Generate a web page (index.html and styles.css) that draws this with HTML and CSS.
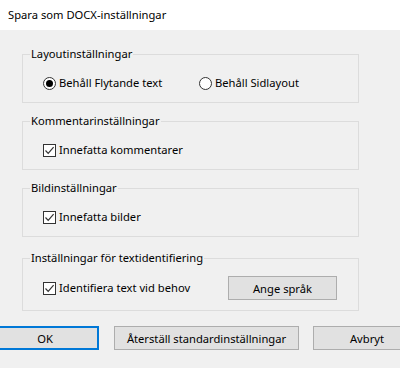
FILE: index.html
```html
<!DOCTYPE html>
<html lang="sv">

<head>
  <meta charset="UTF-8" />
  <title>Spara som DOCX-inställningar</title>
  <link rel="stylesheet" href="styles.css">
</head>

<body>
  <div class="titlebar">Spara som DOCX-inställningar</div>
  <div class="dialog">

    <fieldset class="group">
      <legend>Layoutinställningar</legend>
      <div class="row">
        <label class="option wide"><span class="radio checked"></span>Behåll Flytande text</label>
        <label class="option"><span class="radio"></span>Behåll Sidlayout</label>
      </div>
    </fieldset>

    <fieldset class="group">
      <legend>Kommentarinställningar</legend>
      <div class="row">
        <label class="option"><span class="check"><svg viewBox="0 0 11 11" width="11" height="11"><path d="M1.5 5.5 L4.2 8.3 L9.6 2.2" fill="none" stroke="#333" stroke-width="1.2"/></svg></span>Innefatta kommentarer</label>
      </div>
    </fieldset>

    <fieldset class="group pictures">
      <legend>Bildinställningar</legend>
      <div class="row">
        <label class="option"><span class="check"><svg viewBox="0 0 11 11" width="11" height="11"><path d="M1.5 5.5 L4.2 8.3 L9.6 2.2" fill="none" stroke="#333" stroke-width="1.2"/></svg></span>Innefatta bilder</label>
      </div>
    </fieldset>

    <fieldset class="group last">
      <legend>Inställningar för textidentifiering</legend>
      <div class="row spread">
        <label class="option"><span class="check"><svg viewBox="0 0 11 11" width="11" height="11"><path d="M1.5 5.5 L4.2 8.3 L9.6 2.2" fill="none" stroke="#333" stroke-width="1.2"/></svg></span>Identifiera text vid behov</label>
        <button class="btn lang">Ange språk</button>
      </div>
    </fieldset>

    <div class="actions">
      <button class="btn ok">OK</button>
      <button class="btn reset">Återställ standardinställningar</button>
      <button class="btn cancel">Avbryt</button>
    </div>
  </div>
</body>

</html>
```

FILE: styles.css
```css
body {
  margin: 0;
  padding: 0;
  font-family: "Noto Sans", Arial, sans-serif;
  font-size: 11.2px;
  color: #000;
  background-color: #f0f0f0;
  overflow: hidden;
}

.titlebar {
  background-color: #fff;
  height: 30px;
  line-height: 30px;
  padding-left: 8px;
}

.dialog {
  padding-top: 16px;
}

/* Group boxes */
.group {
  width: 315px;
  margin: 0 0 10px 22px;
  padding: 13px 0 11px 20px;
  border: 1px solid #dcdcdc;
  box-sizing: content-box;
  min-width: 0;
}

.group.pictures {
  margin-bottom: 13px;
}

.group.last {
  width: 294px;
  padding: 10px 21px 10px 20px;
}

/* legend sits at the content edge, pull it back towards the border */
.group legend {
  margin-left: -13px;
  padding: 0 1px;
  line-height: 16px;
}

.row {
  display: flex;
  align-items: center;
  height: 16px;
}

.row.spread {
  justify-content: space-between;
  height: 24px;
}

.option {
  display: flex;
  align-items: center;
  line-height: 16px;
}

.option.wide {
  width: 156px;
}

.radio {
  width: 11px;
  height: 11px;
  border: 1px solid #333;
  border-radius: 50%;
  margin-right: 3px;
  position: relative;
  background-color: #fff;
}

.radio.checked::after {
  content: "";
  position: absolute;
  left: 2px;
  top: 2px;
  width: 7px;
  height: 7px;
  border-radius: 50%;
  background-color: #000;
}

.check {
  width: 11px;
  height: 11px;
  border: 1px solid #333;
  margin-right: 3px;
  background-color: #fff;
  display: flex;
}

/* Buttons */
.btn {
  font-family: inherit;
  font-size: 11.2px;
  color: #000;
  background-color: #e1e1e1;
  border: 1px solid #adadad;
  padding: 0;
  height: 24px;
  flex-shrink: 0;
}

.lang {
  width: 109px;
}

.actions {
  display: flex;
  margin-left: -9px;
  margin-top: 15px;
}

.ok {
  width: 108px;
  border: 2px solid #0078d7;
}

.reset {
  width: 185px;
  margin-left: 15px;
}

.cancel {
  width: 108px;
  margin-left: 14px;
}
```
